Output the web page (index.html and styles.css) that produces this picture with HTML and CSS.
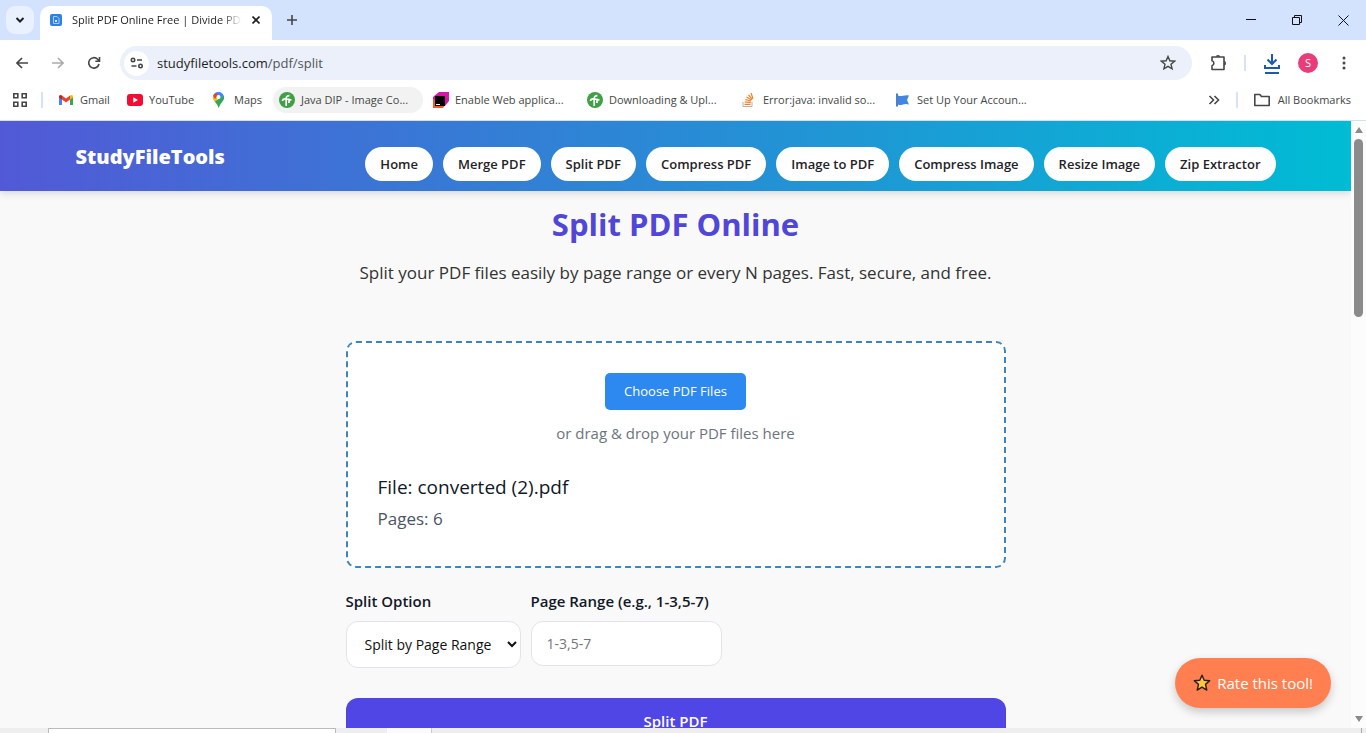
FILE: index.html
```html
<!DOCTYPE html>
<html lang="en">
<head>
<meta charset="utf-8">
<meta name="viewport" content="width=device-width, initial-scale=1">
<title>Split PDF Online Free | Divide PDF</title>
<link rel="stylesheet" href="styles.css">
</head>
<body>
<div class="browser">
  <div class="tabstrip">
    <button class="tab-search" aria-label="Search tabs"><svg width="10" height="10" viewBox="0 0 10 10"><path d="M1.5 3l3.500 3.500L8.500 3" class="line bold"/></svg></button>
    <div class="tab">
      <svg width="12" height="12" viewBox="0 0 12 12"><rect width="12" height="12" rx="2" fill="#2f80e4"/><path d="M3.500 2.500h3.500l2 2v5H3.500z" fill="none" stroke="#a9cdf8"/><path d="M5 8V6h2v2z" fill="#d6e8ff"/></svg>
      <span class="tab-title">Split PDF Online Free | Divide PDF</span>
      <button class="tab-close" aria-label="Close tab"><svg width="8" height="8" viewBox="0 0 8 8"><path d="M.5.5l7 7M7.500.5l-7 7" class="line close"/></svg></button>
    </div>
    <button class="new-tab" aria-label="New tab"><svg width="10" height="10" viewBox="0 0 10 10"><path d="M5 0v10M0 5h10" class="line"/></svg></button>
    <div class="window-controls">
      <button aria-label="Minimize"><svg width="10" height="10" viewBox="0 0 10 10"><path d="M0 4.500h10" stroke="#111"/></svg></button>
      <button aria-label="Restore"><svg width="10" height="10" viewBox="0 0 10 10"><path d="M.5 2.500h7v7h-7zM2.500 2.500v-2h7v7h-2" fill="none" stroke="#111"/></svg></button>
      <button aria-label="Close"><svg width="11" height="11" viewBox="0 0 11 11"><path d="M.5.5l10 10M10.500.5l-10 10" stroke="#111"/></svg></button>
    </div>
  </div>

  <div class="toolbar">
    <button class="tool" aria-label="Back"><svg width="12" height="12" viewBox="0 0 12 12"><path d="M12 6H1M6 1L1 6l5 5" class="line"/></svg></button>
    <button class="tool disabled" aria-label="Forward"><svg width="12" height="12" viewBox="0 0 12 12"><path d="M0 6h11M6 1l5 5-5 5" class="line"/></svg></button>
    <button class="tool" aria-label="Reload"><svg width="14" height="14" viewBox="0 0 14 14"><path d="M12 8a5.200 5.200 0 1 1-1.300-4.700L12.500 5M12.500 1v4.200H8.300" class="line"/></svg></button>
    <div class="omnibox">
      <button class="site-info" aria-label="Site information"><svg width="14" height="12" viewBox="0 0 14 12"><circle cx="3" cy="3" r="1.700" class="line"/><path d="M7 3h5M1.500 9h5" class="line"/><circle cx="10.500" cy="9" r="1.700" class="line"/></svg></button>
      <span class="url">studyfiletools.com<span class="url-path">/pdf/split</span></span>
      <button class="star" aria-label="Bookmark this tab"><svg width="16" height="16" viewBox="0 0 16 16"><path d="M8 1.500l1.900 4.300 4.700.4L11 9.300l1.100 4.600L8 11.400l-4.100 2.500L5 9.300 1.400 6.200l4.700-.4z" class="line thin"/></svg></button>
    </div>
    <button class="tool ext" aria-label="Extensions"><svg width="18" height="18" viewBox="0 0 18 18"><path d="M3 3h12v12.500H3v-3.700a2.600 2.600 0 0 0 0-5z" class="line" stroke-linejoin="round"/><path d="M6.800 2.800a2.200 1.800 0 0 1 4.400 0zM15.200 7a1.800 2.200 0 0 1 0 4.400z" fill="#444746"/></svg></button>
    <span class="divider"></span>
    <button class="tool" aria-label="Downloads"><svg width="18" height="22" viewBox="0 0 18 22" fill="none" stroke="#1a5bb0" stroke-width="2"><path d="M9 2v9M4.500 7.500L9 12l4.500-4.500M2 13v3h14v-3M2 21h14"/></svg></button>
    <button class="avatar" aria-label="Profile">S</button>
    <button class="tool menu" aria-label="Menu"><svg width="4" height="16" viewBox="0 0 4 16" fill="#444746"><circle cx="2" cy="3" r="1.500"/><circle cx="2" cy="8" r="1.500"/><circle cx="2" cy="13" r="1.500"/></svg></button>
  </div>

  <nav class="bookmarks" aria-label="Bookmarks">
    <button class="apps" aria-label="Apps"><svg width="14" height="14" viewBox="0 0 14 14"><path d="M.8.8h4v4h-4zM9.200.8h4v4h-4zM.8 9.200h4v4h-4zM9.200 9.200h4v4h-4z" class="line"/></svg></button>
    <span class="divider"></span>
    <a class="bm gmail" href="#"><svg width="16" height="16" viewBox="0 0 16 16"><path d="M1 4v9h3V7z" fill="#4285f4"/><path d="M15 4v9h-3V7z" fill="#34a853"/><path d="M4 7.500v-4l4 3 4-3v4l-4 3z" fill="#ea4335"/><path d="M1 4.500Q1 2 4 3.500v4L1 5.500z" fill="#c5221f"/><path d="M15 4.500Q15 2 12 3.500v4l3-2z" fill="#fbbc04"/></svg>Gmail</a>
    <a class="bm youtube" href="#"><svg width="16" height="16" viewBox="0 0 16 16"><rect y="2" width="16" height="12" rx="3" fill="#f20d33"/><path d="M6.300 5.300v5.400L11 8z" fill="#fff"/></svg>YouTube</a>
    <a class="bm maps" href="#"><svg width="14" height="16" viewBox="0 0 14 16"><path d="M6.500 0a5.500 5.500 0 0 0-5.300 4L5 7l4-6z" fill="#4285f4"/><path d="M1.200 4Q.2 7 3 10l3.500-4z" fill="#fbbc04"/><path d="M2.800 9.500Q5.500 12.500 6.500 16 8 12 10.500 9.500 13 6.500 11.700 3.500L6.500 7z" fill="#34a853"/><path d="M1.200 4Q2 1.500 4 .7L6 3 3 7z" fill="#ea4335"/><path d="M6.500 0q3.700 0 5.200 3.500L8 7 5 3z" fill="#4285f4"/><circle cx="6.500" cy="5" r="2" fill="#fff"/></svg>Maps</a>
    <a class="bm long current" href="#"><svg width="16" height="16" viewBox="0 0 16 16"><circle cx="8" cy="8" r="8" fill="#3fa045"/><path d="M7.200 14V6.500q0-3 3.300-2.800M3.500 9q0-2 3.500-2.300L12.500 8M10 6.500V11" fill="none" stroke="#fff" stroke-width="1.700"/></svg>Java DIP - Image Co...</a>
    <a class="bm long" href="#"><svg width="16" height="16" viewBox="0 0 16 16"><path d="M6 0h10v9l-4 5H0V5z" fill="#d616a9"/><path d="M0 7v9h10l2-3z" fill="#f1592a"/><rect x="2" y="4" width="10" height="10" fill="#000"/><path d="M3 12.500h4" stroke="#fff"/></svg>Enable Web applica...</a>
    <a class="bm long" href="#"><svg width="16" height="16" viewBox="0 0 16 16"><circle cx="8" cy="8" r="8" fill="#3fa045"/><path d="M7.200 14V6.500q0-3 3.300-2.800M3.500 9q0-2 3.500-2.300L12.500 8M10 6.500V11" fill="none" stroke="#fff" stroke-width="1.700"/></svg>Downloading &amp; Upl...</a>
    <a class="bm long" href="#"><svg width="16" height="16" viewBox="0 0 16 16" fill="none"><path d="M2 10v4.500h9V10" stroke="#b7afa8"/><path d="M3.500 12.300h6M3.700 9.900l6 .7M4.300 7.500l5.700 1.600M5.500 5l5 3M7.500 2.800l3.800 4.500M10 1l2 5.700" stroke="#f48024" stroke-width="1.200"/></svg>Error:java: invalid so...</a>
    <a class="bm long" href="#"><svg width="16" height="16" viewBox="0 0 16 16"><path d="M2 1.500v13" stroke="#4a7fd0" stroke-width="2"/><path d="M3 3.500q2 1 5 .3t6-.3l-2 4.500 2 4.500q-3-1-6 0t-5 0z" fill="#4287df"/></svg>Set Up Your Accoun...</a>
    <button class="overflow" aria-label="More bookmarks"><svg width="12" height="10" viewBox="0 0 12 10"><path d="M1.500 1l4 4-4 4M6.500 1l4 4-4 4" class="line"/></svg></button>
    <span class="divider"></span>
    <a class="bm all" href="#"><svg width="16" height="14" viewBox="0 0 16 14"><path d="M.8 1.500h5l1.700 2h7.700v9H.8z" class="line" stroke-linejoin="round"/></svg>All Bookmarks</a>
  </nav>
</div>

<div class="viewport">
  <div class="page">
    <header class="site-header">
      <div class="header-inner">
        <a class="logo" href="#">StudyFileTools</a>
        <nav class="site-nav" aria-label="Tools">
          <a href="#">Home</a><a href="#">Merge PDF</a><a href="#">Split PDF</a><a href="#">Compress PDF</a><a href="#">Image to PDF</a><a href="#">Compress Image</a><a href="#">Resize Image</a><a href="#">Zip Extractor</a>
        </nav>
      </div>
    </header>
    <main class="content">
      <h1>Split PDF Online</h1>
      <p class="intro">Split your PDF files easily by page range or every N pages. Fast, secure, and free.</p>
      <section class="dropzone">
        <button class="choose">Choose PDF Files</button>
        <p class="hint">or drag &amp; drop your PDF files here</p>
        <div class="file">
          <p class="file-name">File: converted (2).pdf</p>
          <p class="file-pages">Pages: 6</p>
        </div>
      </section>
      <form class="options">
        <div class="field option">
          <label for="mode">Split Option</label>
          <select id="mode"><option>Split by Page Range</option><option>Split every N pages</option></select>
        </div>
        <div class="field range">
          <label for="range">Page Range (e.g., 1-3,5-7)</label>
          <input id="range" type="text" placeholder="1-3,5-7">
        </div>
        <button class="submit" type="button">Split PDF</button>
      </form>
    </main>
    <button class="rate"><svg width="18" height="18" viewBox="0 0 18 18"><path d="M9 1.200l2.200 5 5.500.5-4.200 3.700 1.300 5.700L9 13.200l-4.800 2.900 1.300-5.700L1.300 6.700l5.500-.5z" fill="#ffc83d" stroke="#2b1b12" stroke-width="1.400" stroke-linejoin="round"/></svg>Rate this tool!</button>
  </div>
  <div class="scrollbar" aria-hidden="true">
    <span class="arrow up"></span>
    <span class="thumb"></span>
    <span class="arrow down"></span>
  </div>
</div>
<div class="taskbar" aria-hidden="true"><span class="search"></span><span class="task"></span><span class="edge"></span></div>
</body>
</html>
```
FILE: styles.css
```css
* { box-sizing: border-box; }

body {
  margin: 0;
  height: 100vh;
  display: flex;
  flex-direction: column;
  overflow: hidden;
  font-family: "Open Sans", "Noto Sans", sans-serif;
  color: #111827;
}

button { margin: 0; padding: 0; border: 0; background: none; font-family: inherit; cursor: pointer; }
a { color: inherit; text-decoration: none; }
svg { flex: none; display: block; }
h1, p { margin: 0; }

.line { fill: none; stroke: #444746; stroke-width: 1.6; }
.thin { stroke-width: 1.4; }
.close { stroke: #1f1f1f; }
.bold { stroke: #1f1f1f; stroke-width: 2; }

/* Browser frame */
.browser { flex: none; background: #fff; border-bottom: 1px solid #d5dff0; }

.tabstrip { display: flex; height: 40px; background: #d3e2fd; }
.tab-search {
  width: 28px;
  height: 28px;
  margin: 6px;
  display: grid;
  place-items: center;
  border-radius: 9px;
  background: #e9f0fe;
}
.tab {
  width: 232px;
  height: 34px;
  margin-top: 6px;
  padding: 0 12px 6px 10px;
  display: flex;
  align-items: center;
  gap: 10px;
  border-radius: 10px 10px 0 0;
  background: #fff;
}
.tab-title {
  flex: 1;
  overflow: hidden;
  white-space: nowrap;
  font-size: 11px;
  line-height: 20px;
  color: #1f1f1f;
  mask-image: linear-gradient(90deg, #000 88%, transparent);
}
.new-tab { width: 40px; display: grid; place-items: center; }
.window-controls { display: flex; margin-left: auto; }
.window-controls button { width: 46px; display: grid; place-items: center; }

.toolbar { display: flex; align-items: center; height: 46px; padding: 0 4px; }
.tool { width: 36px; height: 36px; display: grid; place-items: center; }
.disabled { opacity: 0.45; }
.omnibox {
  flex: 1;
  height: 34px;
  margin: 0 8px;
  padding: 0 16px 0 4px;
  display: flex;
  align-items: center;
  gap: 8px;
  border-radius: 17px;
  background: #ebf0fa;
}
.site-info { width: 25px; height: 25px; display: grid; place-items: center; border-radius: 50%; background: #fff; }
.url { flex: 1; font-size: 13px; color: #1f1f1f; }
.url-path { color: #50555b; }
.divider { width: 2px; height: 16px; background: #d5e2f8; }
.ext { margin-right: 8px; }
.toolbar .divider { margin-right: 8px; }
.avatar {
  width: 20px;
  height: 20px;
  margin: 0 8px;
  border-radius: 50%;
  background: #e93d7a;
  color: #fff;
  font-size: 11px;
  line-height: 20px;
}

.bookmarks {
  display: flex;
  align-items: center;
  height: 34px;
  padding: 0 15px 6px 13px;
  font-size: 11px;
  line-height: 16px;
  color: #444746;
  white-space: nowrap;
}
.apps { margin-right: 14px; }
.bm { display: flex; align-items: center; gap: 6px; height: 26px; }
.gmail { width: 69px; margin-left: 15px; }
.youtube { width: 85px; }
.maps { width: 61px; gap: 8px; }
.long { width: 150px; margin-right: 4px; padding: 0 6px; border-radius: 13px; }
.current { background: #f2f2f2; }
.overflow { margin: 0 16px 0 auto; }
.bookmarks .all { margin-left: 16px; gap: 8px; }

/* Page */
.viewport { flex: 1; min-height: 0; display: flex; }
.page { position: relative; flex: 1; overflow: hidden; background: #f9f9f9; }

.site-header {
  position: relative;
  padding: 20px 24px 10px;
  background: linear-gradient(90deg, #5259d6, #00bcd4);
  box-shadow: 0 2px 8px rgba(0, 0, 0, 0.15);
}
.header-inner {
  max-width: 1200px;
  margin: 0 auto;
  display: flex;
  justify-content: space-between;
  align-items: flex-start;
}
.logo { font-size: 20px; line-height: 32px; font-weight: 800; color: #fff; }
.site-nav { display: flex; gap: 10px; padding-top: 6px; }
.site-nav a {
  padding: 0 15px;
  border-radius: 17px;
  background: #fff;
  color: #1f2328;
  font-size: 13px;
  line-height: 34px;
  font-weight: 600;
  white-space: nowrap;
}

.content { max-width: 660px; margin: 0 auto; padding-top: 12px; }
h1 { font-size: 31px; line-height: 42px; font-weight: 700; text-align: center; color: #5046d8; }
.intro { margin-top: 12px; font-size: 17px; line-height: 32px; text-align: center; color: #333; }

.dropzone {
  margin-top: 52px;
  padding: 30px 30px 32px;
  border: 2px dashed #3d86bd;
  border-radius: 10px;
  background: #fff;
  text-align: center;
}
.choose {
  padding: 0 19px;
  border-radius: 5px;
  background: #2d89ef;
  color: #fff;
  font-size: 13px;
  line-height: 37px;
}
.hint { margin-top: 10px; font-size: 15px; line-height: 26px; color: #6c757d; }
.file { margin-top: 24px; text-align: left; }
.file-name { font-size: 19px; line-height: 34px; }
.file-pages { font-size: 17px; line-height: 30px; color: #4b5563; }

.options { display: flex; flex-wrap: wrap; align-items: flex-start; column-gap: 10px; margin-top: 20px; }
.field { display: flex; flex-direction: column; gap: 6px; }
.option { width: 175px; }
.range { width: 191px; }
label { font-size: 15px; line-height: 27px; font-weight: 600; white-space: nowrap; }
select, input {
  width: 100%;
  height: 47px;
  border: 1px solid #e2e4e8;
  border-radius: 12px;
  background: #fff;
  color: #111;
  font-family: inherit;
  font-size: 14px;
}
select { padding: 0 0 0 14px; }
input { height: 45px; padding: 0 15px; }
input::placeholder { color: #757575; }
.submit {
  flex: 0 0 100%;
  height: 46px;
  margin-top: 30px;
  border-radius: 12px;
  background: #4f46e5;
  color: #fff;
  font-size: 15px;
  font-weight: 600;
}

.rate {
  position: absolute;
  right: 20px;
  bottom: 20px;
  height: 50px;
  padding: 0 18px;
  display: flex;
  align-items: center;
  gap: 6px;
  border-radius: 25px;
  background: #ff7f50;
  color: #fff;
  font-size: 15px;
  font-weight: 500;
  box-shadow: 0 4px 10px rgba(0, 0, 0, 0.2);
}

.scrollbar {
  width: 15px;
  padding: 6px 0;
  display: flex;
  flex-direction: column;
  align-items: center;
  background: #fcfcfc;
}
.thumb { width: 9px; height: 178px; margin-top: 6px; border-radius: 5px; background: #8b8b8b; }
.arrow { border: 4px solid transparent; }
.up { border-top: 0; border-bottom: 6px solid #8b8b8b; }
.down { margin-top: auto; border-bottom: 0; border-top: 6px solid #8b8b8b; }

.taskbar { flex: none; height: 5px; display: flex; background: #eee; }
.search { width: 288px; margin-left: 48px; border: 1px solid #bbb; border-bottom: 0; background: #fff; }
.task { width: 45px; margin-left: 51px; border-right: 1px solid #ccc; background: #fafafa; }
.edge { width: 1px; margin: 0 4px 0 auto; background: #aaa; }
```
